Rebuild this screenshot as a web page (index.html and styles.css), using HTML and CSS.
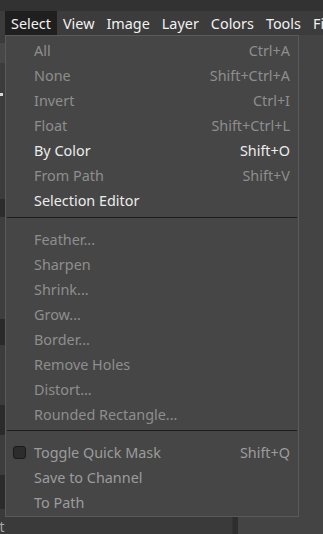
FILE: index.html
```html
<!DOCTYPE html>
<html>
<head>
<meta charset="utf-8">
<link rel="stylesheet" href="styles.css">
</head>
<body>
<div class="topbar"></div>
<div class="menubar">
  <span class="mb-item active">Select</span>
  <span class="mb-item">View</span>
  <span class="mb-item">Image</span>
  <span class="mb-item">Layer</span>
  <span class="mb-item">Colors</span>
  <span class="mb-item">Tools</span>
  <span class="mb-item">Filters</span>
</div>
<div class="workspace">
  <div class="leftpanel">
    <div class="blk b1"></div>
    <div class="blk b2"><span class="tick"></span></div>
    <div class="blk b3"></div>
    <div class="blk b4"></div>
    <div class="blk b5"></div>
    <div class="blk b6"></div>
    <div class="blk b7"></div>
    <div class="blk b8"></div>
    <div class="blk b9"></div>
    <div class="blk b10"></div>
    <div class="bottomtext">Paint</div>
  </div>
  <div class="divider"></div>
  <div class="rightpanel"></div>
</div>

<div class="menu">
  <div class="item dis"><span class="label">All</span><span class="key">Ctrl+A</span></div>
  <div class="item dis"><span class="label">None</span><span class="key">Shift+Ctrl+A</span></div>
  <div class="item dis"><span class="label">Invert</span><span class="key">Ctrl+I</span></div>
  <div class="item dis"><span class="label">Float</span><span class="key">Shift+Ctrl+L</span></div>
  <div class="item on"><span class="label">By Color</span><span class="key">Shift+O</span></div>
  <div class="item dis"><span class="label">From Path</span><span class="key">Shift+V</span></div>
  <div class="item on"><span class="label">Selection Editor</span></div>
  <div class="sep"></div>
  <div class="item dis"><span class="label">Feather...</span></div>
  <div class="item dis"><span class="label">Sharpen</span></div>
  <div class="item dis"><span class="label">Shrink...</span></div>
  <div class="item dis"><span class="label">Grow...</span></div>
  <div class="item dis"><span class="label">Border...</span></div>
  <div class="item dis"><span class="label">Remove Holes</span></div>
  <div class="item dis"><span class="label">Distort...</span></div>
  <div class="item dis"><span class="label">Rounded Rectangle...</span></div>
  <div class="sep sep2"></div>
  <div class="item mid"><span class="check"></span><span class="label">Toggle Quick Mask</span><span class="key">Shift+Q</span></div>
  <div class="item mid"><span class="label">Save to Channel</span></div>
  <div class="item mid"><span class="label">To Path</span></div>
</div>
</body>
</html>
```
FILE: styles.css
```css
html, body {
  margin: 0;
  padding: 0;
}
body {
  width: 323px;
  height: 534px;
  overflow: hidden;
  background: #444444;
  font-family: "Noto Sans", "Open Sans", sans-serif;
  font-size: 13px;
  position: relative;
}
.topbar {
  height: 11px;
  background: #323232;
}
.menubar {
  height: 24px;
  background: #3c3c3c;
  display: flex;
  padding-left: 5px;
  white-space: nowrap;
  overflow: hidden;
}
.mb-item {
  color: #f2f2f2;
  padding: 0 6px;
  line-height: 25px;
  font-size: 14.4px;
}
.mb-item.active {
  background: #1f1f1f;
}
.workspace {
  display: flex;
  height: 499px;
}
.leftpanel {
  width: 232px;
  background: #3b3b3b;
  display: flex;
  flex-direction: column;
  position: relative;
}
.blk { flex: none; }
.b1 { height: 8px; background: #3b3b3b; }
.b2 { height: 20px; background: #474747; position: relative; }
.b3 { height: 136px; background: #3c3c3c; }
.b4 { height: 18px; background: #2c2c2c; }
.b5 { height: 102px; background: #3e3e3e; }
.b6 { height: 26px; background: #2a2a2a; }
.b7 { height: 60px; background: #3c3c3c; }
.b8 { height: 30px; background: #2b2b2b; }
.b9 { height: 40px; background: #3d3d3d; }
.b10 { height: 34px; background: #2b2b2b; }
.tick {
  position: absolute;
  left: 0;
  top: 50px;
  width: 3px;
  height: 3px;
  background: #d8d8d8;
}
.bottomtext {
  flex: 1;
  background: #3a3a3a;
  color: #a8a8a8;
  font-size: 14px;
  line-height: 22px;
  padding-top: 7px;
  text-indent: -29px;
  overflow: hidden;
  white-space: nowrap;
}
.divider {
  width: 5px;
  background: #2e2e2e;
  border-left: 1px solid #333;
}
.rightpanel {
  flex: 1;
  background: #444444;
}

.menu {
  position: absolute;
  left: 5px;
  top: 35px;
  width: 292px;
  background: #464646;
  border: 1px solid #5a5a5a;
  padding: 2px 0 1px 0;
}
.item {
  height: 25px;
  display: flex;
  align-items: center;
  padding: 0 8px 0 28px;
  position: relative;
  font-size: 14.4px;
}
.label { flex: 1; white-space: nowrap; }
.key { white-space: nowrap; }
.item.dis { color: #8e8e8e; }
.item.mid { color: #9c9c9c; }
.item.on { color: #ececec; }
.sep {
  height: 14px;
  display: flex;
  align-items: flex-start;
  padding: 0 1px;
  box-sizing: border-box;
}
.sep::before {
  content: "";
  display: block;
  width: 100%;
  height: 1px;
  margin-top: 4px;
  background: #1c1c1c;
}
.sep2 { height: 13px; }
.sep2::before { margin-top: 3px; }
.check {
  position: absolute;
  left: 7px;
  top: 6px;
  width: 11px;
  height: 11px;
  border: 1px solid #1a1a1a;
  border-radius: 3px;
  background: #2c2c2c;
}
```
